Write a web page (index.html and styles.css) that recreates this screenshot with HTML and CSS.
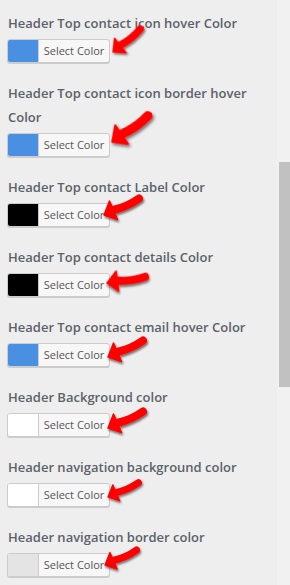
FILE: index.html
```html
<!DOCTYPE html>
<html lang="en">
<head>
    <meta charset="UTF-8">
    <meta name="viewport" content="width=device-width, initial-scale=1.0">
    <title>Header colours</title>
    <link rel="stylesheet" href="styles.css">
</head>
<body>
    <svg width="0" height="0" class="defs">
        <defs>
            <filter id="shade" x="-30%" y="-30%" width="160%" height="160%">
                <feDropShadow dx="1" dy="2" stdDeviation="1.2" flood-color="#000" flood-opacity="0.55"/>
            </filter>
            <g id="arrow">
                <path d="M11 18 Q25 15 37 6.5" fill="none" stroke="#f00" stroke-width="8" stroke-linecap="round"/>
                <polygon points="2,23 7.5,9 15.5,27.5" fill="#f00" stroke="#f00" stroke-width="1.5" stroke-linejoin="round"/>
            </g>
        </defs>
    </svg>

    <div class="page">
        <div class="panel">
            <div class="field">
                <label>Header Top contact icon hover Color</label>
                <div class="picker">
                    <span class="swatch blue"></span><button>Select Color</button>
                    <svg class="arrow a1" viewBox="0 0 42 30"><use href="#arrow" filter="url(#shade)"/></svg>
                </div>
            </div>
            <div class="field">
                <label>Header Top contact icon border hover Color</label>
                <div class="picker">
                    <span class="swatch blue"></span><button>Select Color</button>
                    <svg class="arrow a2" viewBox="0 0 42 30"><use href="#arrow" filter="url(#shade)"/></svg>
                </div>
            </div>
            <div class="field">
                <label>Header Top contact Label Color</label>
                <div class="picker">
                    <span class="swatch black"></span><button>Select Color</button>
                    <svg class="arrow a3" viewBox="0 0 42 30"><use href="#arrow" filter="url(#shade)"/></svg>
                </div>
            </div>
            <div class="field">
                <label>Header Top contact details Color</label>
                <div class="picker">
                    <span class="swatch black"></span><button>Select Color</button>
                    <svg class="arrow a4" viewBox="0 0 42 30"><use href="#arrow" filter="url(#shade)"/></svg>
                </div>
            </div>
            <div class="field">
                <label>Header Top contact email hover Color</label>
                <div class="picker">
                    <span class="swatch blue"></span><button>Select Color</button>
                    <svg class="arrow" viewBox="0 0 42 30"><use href="#arrow" filter="url(#shade)"/></svg>
                </div>
            </div>
            <div class="field">
                <label>Header Background color</label>
                <div class="picker">
                    <span class="swatch white"></span><button>Select Color</button>
                    <svg class="arrow a6" viewBox="0 0 42 30"><use href="#arrow" filter="url(#shade)"/></svg>
                </div>
            </div>
            <div class="field">
                <label>Header navigation background color</label>
                <div class="picker">
                    <span class="swatch white"></span><button>Select Color</button>
                    <svg class="arrow a7" viewBox="0 0 42 30"><use href="#arrow" filter="url(#shade)"/></svg>
                </div>
            </div>
            <div class="field">
                <label>Header navigation border color</label>
                <div class="picker">
                    <span class="swatch grey"></span><button>Select Color</button>
                    <svg class="arrow a8" viewBox="0 0 42 30"><use href="#arrow" filter="url(#shade)"/></svg>
                </div>
            </div>
        </div>
        <div class="scrollbar">
            <div class="thumb"></div>
        </div>
    </div>
</body>
</html>
```

FILE: styles.css
```css
body {
    margin: 0;
    height: 585px;
    overflow: hidden;
    background: #eeeeee;
    font-family: "Open Sans", "Liberation Sans", sans-serif;
}

.defs {
    position: absolute;
}

.page {
    display: flex;
    height: 100%;
}

.panel {
    width: 262px;
    padding: 11px 7px 0 8px;
    flex: none;
}

.field {
    margin-bottom: 18px;
}

.field label {
    display: block;
    font-size: 13px;
    font-weight: 600;
    line-height: 24px;
    color: #5b626a;
    margin-bottom: 4px;
}

.picker {
    position: relative;
    display: flex;
    width: 101px;
    height: 22px;
    margin-left: -1px;
    border: 1px solid #cccccc;
    border-radius: 3px;
    box-shadow: 0 1px 0 #cccccc;
    background: #f7f7f7;
}

.swatch {
    width: 30px;
    border-right: 1px solid #cccccc;
    border-radius: 2px 0 0 2px;
}

.blue  { background: #4a90e2; }
.black { background: #000000; }
.white { background: #ffffff; }
.grey  { background: #e4e4e4; }

.picker button {
    flex: 1;
    padding: 0;
    border: none;
    background: transparent;
    font-family: "Open Sans", "Liberation Sans", sans-serif;
    font-size: 11px;
    color: #555555;
    line-height: 22px;
}

/* red pointers drawn over the pickers */
.arrow {
    position: absolute;
    width: 42px;
    height: 30px;
    left: 98px;
    top: -10px;
    overflow: visible;
    transform-origin: 2px 23px;
}

.a1 { left: 103px; top: -11px; transform: rotate(-15deg) scale(0.92); }
.a2 { left: 102px; top: -15px; transform: rotate(-11deg) scale(1.15); }
.a3 { left: 94px;  top: -12px; }
.a4 { left: 97px;  top: -14px; transform: rotate(16deg); }
.a6 { top: -9px; }
.a7 { transform: scale(0.87); }
.a8 { left: 95px;  top: -12px; transform: scale(0.9); }

.scrollbar {
    flex: 1;
    background: #f1f1f1;
    padding: 162px 0 0 2px;
}

.thumb {
    height: 225px;
    background: #c1c1c1;
}
```
